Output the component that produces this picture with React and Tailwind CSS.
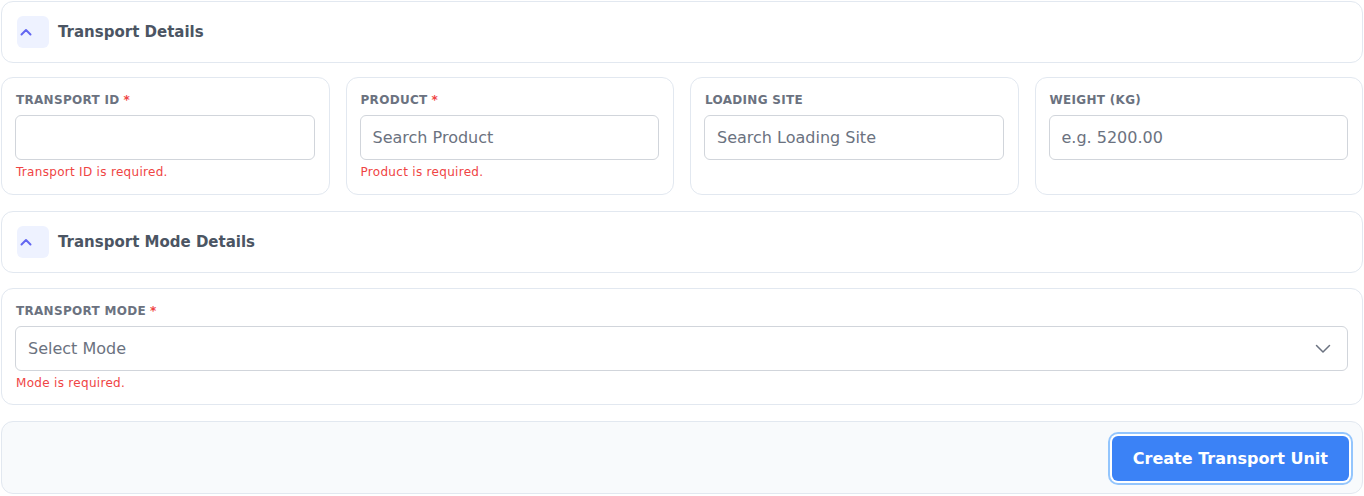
import React from "react";

function ChevronUp() {
  return (
    <svg width="12" height="8" viewBox="0 0 12 8" fill="none">
      <path d="M1.5 6.5 L6 2 L10.5 6.5" stroke="#6366f1" strokeWidth="2" strokeLinecap="round" strokeLinejoin="round" />
    </svg>
  );
}

function ChevronDown() {
  return (
    <svg width="16" height="16" viewBox="0 0 16 16" fill="none">
      <path d="M1.5 4.5 L8 11 L14.5 4.5" stroke="#6b7280" strokeWidth="1.5" strokeLinecap="round" strokeLinejoin="round" />
    </svg>
  );
}

function SectionHeader({ title }) {
  return (
    <div className="flex items-center rounded-xl border border-[#e2e8f0] bg-white py-3.5 pl-[15px] pr-3.5">
      <button className="flex h-8 w-8 items-center rounded-md bg-[#eef2ff] pl-[3px]">
        <ChevronUp />
      </button>
      <span className="ml-[9px] text-[15px] font-bold text-[#4b5563]">{title}</span>
    </div>
  );
}

function Label({ text, required }) {
  return (
    <div className="mb-[7px] text-xs leading-4 font-bold uppercase tracking-wide text-[#6b7280]">
      {text}
      {required && <span className="ml-1 text-[#ef4444]">*</span>}
    </div>
  );
}

function Field({ label, required, placeholder, error }) {
  return (
    <div className="rounded-xl border border-[#e2e8f0] bg-white py-3.5 pl-[13px] pr-3.5">
      <div className="pl-px">
        <Label text={label} required={required} />
      </div>
      <input
        className="block h-[45px] w-full rounded-md border border-[#d1d5db] bg-white px-3 text-base text-[#374151] placeholder:text-[#6b7280] outline-none"
        placeholder={placeholder}
      />
      {error && <div className="mt-1 pl-px text-xs leading-4 tracking-wide text-[#ef4444]">{error}</div>}
    </div>
  );
}

export default function App() {
  return (
    <div className="bg-white px-px pt-px" style={{ fontFamily: '"DejaVu Sans", sans-serif' }}>
      <SectionHeader title="Transport Details" />
      <div className="mt-[14px] grid grid-cols-4 gap-4">
        <Field label="Transport ID" required placeholder="" error="Transport ID is required." />
        <Field label="Product" required placeholder="Search Product" error="Product is required." />
        <Field label="Loading Site" placeholder="Search Loading Site" />
        <Field label="Weight (KG)" placeholder="e.g. 5200.00" />
      </div>
      <div className="mt-4">
        <SectionHeader title="Transport Mode Details" />
      </div>
      <div className="mt-[15px] rounded-xl border border-[#e2e8f0] bg-white pb-[13px] pl-[13px] pr-3.5 pt-3.5">
        <div className="pl-px">
          <Label text="Transport Mode" required />
        </div>
        <div className="flex h-[45px] w-full items-center justify-between rounded-md border border-[#d1d5db] bg-white pl-3 pr-4">
          <span className="text-base text-[#6b7280]">Select Mode</span>
          <ChevronDown />
        </div>
        <div className="mt-1 pl-px text-xs leading-4 tracking-wide text-[#ef4444]">Mode is required.</div>
      </div>
      <div className="mt-4 flex justify-end rounded-xl border border-[#e2e8f0] bg-[#f8fafc] pb-[12px] pr-[13px] pt-[14px]">
        <button className="h-[45px] rounded-md bg-[#3b82f6] px-[21px] text-base font-bold text-white ring-2 ring-[#93c5fd] ring-offset-2">
          Create Transport Unit
        </button>
      </div>
    </div>
  );
}
